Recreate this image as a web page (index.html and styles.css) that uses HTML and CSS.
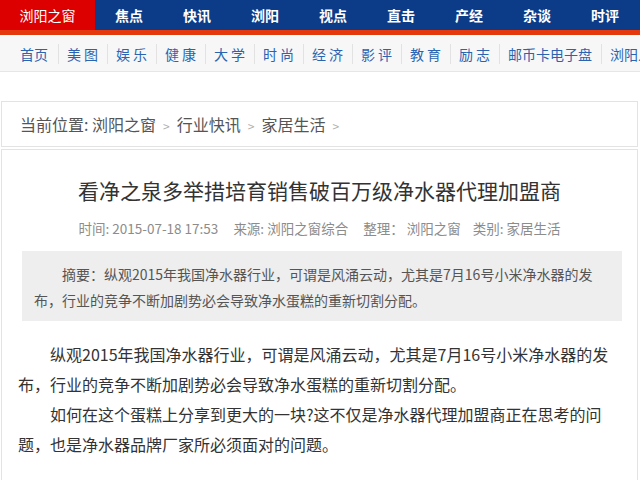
FILE: index.html
```html
<!DOCTYPE html>
<html lang="zh-CN">
<head>
    <meta charset="UTF-8">
    <meta name="viewport" content="width=device-width, initial-scale=1.0">
    <title>看净之泉多举措培育销售破百万级净水器代理加盟商</title>
    <link rel="stylesheet" href="styles.css">
</head>
<body>
    <div class="topnav">
        <a class="home" href="#">浏阳之窗</a>
        <a href="#">焦点</a>
        <a href="#">快讯</a>
        <a href="#">浏阳</a>
        <a href="#">视点</a>
        <a href="#">直击</a>
        <a href="#">产经</a>
        <a href="#">杂谈</a>
        <a href="#">时评</a>
    </div>

    <div class="subnav">
        <a class="first" href="#">首页</a>
        <a class="sp" href="#">美图</a>
        <a class="sp" href="#">娱乐</a>
        <a class="sp" href="#">健康</a>
        <a class="sp" href="#">大学</a>
        <a class="sp" href="#">时尚</a>
        <a class="sp" href="#">经济</a>
        <a class="sp" href="#">影评</a>
        <a class="sp" href="#">教育</a>
        <a class="sp" href="#">励志</a>
        <a href="#">邮币卡电子盘</a>
        <a href="#">浏阳人</a>
    </div>

    <div class="crumb">
        当前位置: <a href="#">浏阳之窗</a><span class="gt">&gt;</span><a href="#">行业快讯</a><span class="gt">&gt;</span><a href="#">家居生活</a><span class="gt">&gt;</span>
    </div>

    <div class="article">
        <h1>看净之泉多举措培育销售破百万级净水器代理加盟商</h1>
        <div class="meta">
            <span>时间: 2015-07-18 17:53</span>
            <span>来源: <a href="#">浏阳之窗综合</a></span>
            <span>整理： 浏阳之窗</span>类别: 家居生活
        </div>
        <div class="summary">摘要：纵观2015年我国净水器行业，可谓是风涌云动，尤其是7月16号小米净水器的发布，行业的竞争不断加剧势必会导致净水蛋糕的重新切割分配。</div>
        <div class="content">
            <p>纵观2015年我国净水器行业，可谓是风涌云动，尤其是7月16号小米净水器的发布，行业的竞争不断加剧势必会导致净水蛋糕的重新切割分配。</p>
            <p>如何在这个蛋糕上分享到更大的一块?这不仅是净水器代理加盟商正在思考的问题，也是净水器品牌厂家所必须面对的问题。</p>
        </div>
    </div>
</body>
</html>
```

FILE: styles.css
```css
/* 浏阳之窗 文章页 */
html {
    overflow: hidden;
}
body {
    margin: 0;
    background: #ffffff;
    font-family: "Noto Sans CJK SC", "Microsoft YaHei", sans-serif;
    color: #333333;
}
a {
    text-decoration: none;
    color: inherit;
}

/* 顶部主导航 */
.topnav {
    display: flex;
    height: 30px;
    background: #0c3c88;
    border-bottom: 5px solid #e5380c;
    white-space: nowrap;
    overflow: hidden;
}
.topnav a {
    width: 68px;
    flex: none;
    text-align: center;
    line-height: 30px;
    font-size: 14px;
    font-weight: bold;
    color: #ffffff;
}
.topnav .home {
    width: 95px;
    background: #dc0000;
    font-weight: normal;
}

/* 二级导航 */
.subnav {
    display: flex;
    align-items: center;
    height: 34px;
    margin-top: 2px;
    padding-left: 20px;
    background: #f7f7f7;
    border-bottom: 1px solid #e6e6e6;
    white-space: nowrap;
    overflow: hidden;
}
.subnav a {
    flex: none;
    font-size: 14px;
    line-height: 20px;
    color: #2a64b0;
    padding: 0 9px 0 8px;
    border-left: 1px solid #e2e2e2;
}
.subnav .first {
    padding-left: 0;
    padding-right: 10px;
    border-left: 0;
}
.subnav .sp {
    letter-spacing: 3px;
    padding-right: 6px;
}

/* 当前位置 */
.crumb {
    margin: 29px 0 0 1px;
    width: 617px;
    height: 44px;
    padding-left: 18px;
    line-height: 44px;
    font-size: 16px;
    color: #555555;
    border: 1px solid #e3e3e3;
}
.crumb a {
    color: #555555;
}
.crumb .gt {
    font-size: 12px;
    color: #b0b0b0;
    padding: 0 7px;
}

/* 文章 */
.article {
    margin: 2px 0 0 1px;
    width: 635px;
    height: 400px;
    border: 1px solid #e3e3e3;
    border-bottom: 0;
}
.article h1 {
    margin: 25px 0 0;
    text-align: center;
    font-size: 21px;
    line-height: 30px;
    font-weight: normal;
    color: #333333;
}
.meta {
    margin: 13px 0 13px;
    text-align: center;
    font-size: 13.5px;
    line-height: 20px;
    color: #8c8c8c;
}
.meta span {
    margin-right: 12px;
}
.summary {
    margin: 0 15px 0 20px;
    padding: 10px 22px 8px 12px;
    background: #eeeeee;
    font-size: 14px;
    line-height: 26px;
    text-indent: 2em;
    color: #555555;
}
.content {
    padding: 18px 23px 0 16px;
}
.content p {
    margin: 0;
    font-size: 16px;
    line-height: 30px;
    text-indent: 2em;
    color: #333333;
}
```
